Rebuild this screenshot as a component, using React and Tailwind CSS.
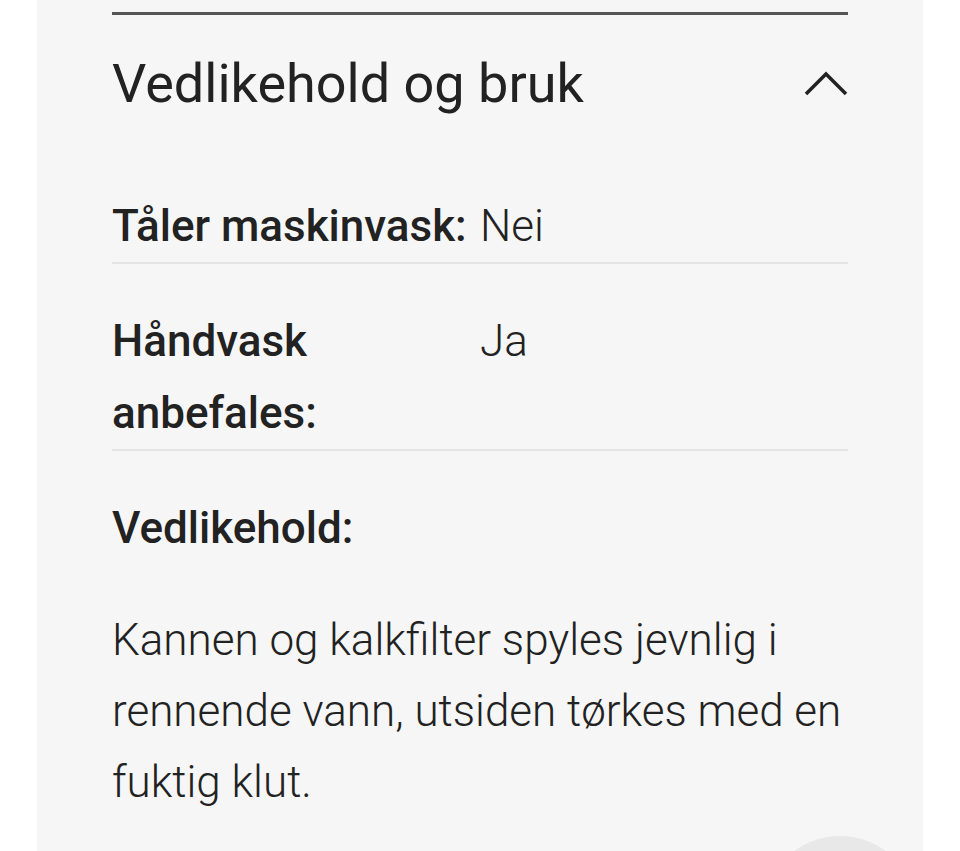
const rows = [
  { label: 'Tåler maskinvask:', value: 'Nei' },
  { label: 'Håndvask anbefales:', value: 'Ja' },
]

function ChevronUp() {
  return (
    <svg width="44" height="26" viewBox="0 0 44 26" fill="none" className="text-[#222]">
      <path d="M2 23 L22 3 L42 23" stroke="currentColor" strokeWidth="3.5" />
    </svg>
  )
}

export default function App() {
  return (
    <div className="min-h-[851px] bg-white font-['Roboto',sans-serif] text-[#222]">
      <div className="mx-[37px] min-h-[851px] bg-[#f6f6f6] px-[75px] pt-[12px] relative overflow-hidden">
        <div className="h-[3px] bg-[#555]" />

        <button className="flex w-full items-center justify-between pt-[36px]">
          <span className="text-[54px] leading-[66px]">Vedlikehold og bruk</span>
          <ChevronUp />
        </button>

        <div className="pt-[32px]">
          {rows.map((r) => (
            <div key={r.label} className="mt-[41px] flex border-b-2 border-[#e4e4e4]">
              <div className="w-1/2 text-[44px] leading-[72px] font-medium">{r.label}</div>
              <div className="w-1/2 text-[44px] leading-[72px] font-light">{r.value}</div>
            </div>
          ))}
        </div>

        <div className="mt-[41px] text-[44px] leading-[72px] font-medium">Vedlikehold:</div>
        <p className="mt-[41px] text-[44px] leading-[71px] font-light">
          Kannen og kalkfilter spyles jevnlig i rennende vann, utsiden tørkes med en fuktig klut.
        </p>

        <div className="absolute left-[726px] top-[836px] h-[154px] w-[154px] rounded-full bg-[#e8e8e8]" />
      </div>
    </div>
  )
}
